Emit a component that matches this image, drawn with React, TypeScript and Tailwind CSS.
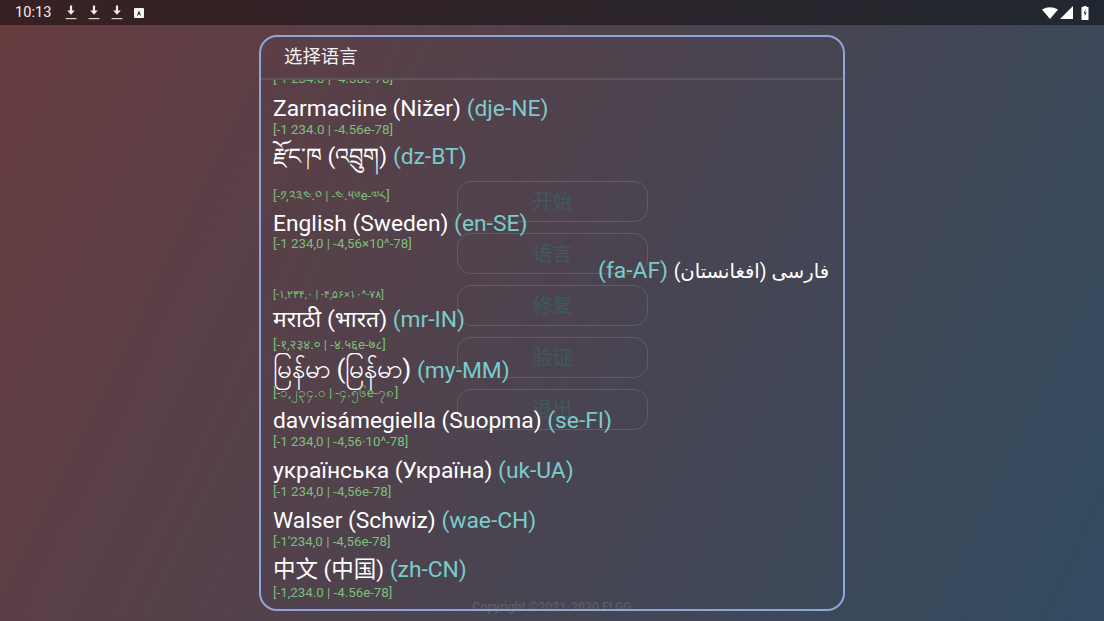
const rows = [
  { name: "Zarmaciine (Nižer)", tag: "(dje-NE)", num: "[-1 234.0 | -4.56e-78]", rowClass: "mt-[9px]", nameClass: "text-[22.8px]", numClass: "mt-0 text-[13.3px]" },
  { name: "རྫོང་ཁ (འབྲུག)", tag: "(dz-BT)", num: "[-༡,༢༣༤.༠ | -༤.༥༦e-༧༨]", rowClass: "mt-[6px]", nameClass: "text-[22.6px]", numClass: "mt-[18px] text-[13px]" },
  { name: "English (Sweden)", tag: "(en-SE)", num: "[-1 234,0 | -4,56×10^-78]", rowClass: "mt-[7px]", nameClass: "text-[22.8px]", numClass: "-mt-px text-[13.3px]" },
  { name: "فارسی (افغانستان)", tag: "(fa-AF)", num: "[-۱,۲۳۴,۰ | -۴,۵۶×۱۰^-۷۸]", rowClass: "mt-[6px]", nameClass: "text-[19.6px]", numClass: "mt-[3px] text-[11px]", rtl: true },
  { name: "मराठी (भारत)", tag: "(mr-IN)", num: "[-१,२३४.० | -४.५६e-७८]", rowClass: "mt-[4px]", nameClass: "text-[22.9px]", numClass: "mt-[4px] text-[13.2px]" },
  { name: "မြန်မာ (မြန်မာ)", tag: "(my-MM)", num: "[-၁,၂၃၄.၀ | -၄.၅၆e-၇၈]", rowClass: "mt-[4px]", nameClass: "text-[26px]", numClass: "mt-[1px] text-[13.5px]" },
  { name: "davvisámegiella (Suopma)", tag: "(se-FI)", num: "[-1 234,0 | -4,56·10^-78]", rowClass: "mt-[8px]", nameClass: "text-[22.8px]", numClass: "mt-0 text-[13.3px]" },
  { name: "українська (Україна)", tag: "(uk-UA)", num: "[-1 234,0 | -4,56e-78]", rowClass: "mt-[8px]", nameClass: "text-[22.8px]", numClass: "mt-0 text-[13.3px]" },
  { name: "Walser (Schwiz)", tag: "(wae-CH)", num: "[-1’234,0 | -4,56e-78]", rowClass: "mt-[8px]", nameClass: "text-[22.8px]", numClass: "mt-0 text-[13.3px]" },
  { name: "中文 (中国)", tag: "(zh-CN)", num: "[-1,234.0 | -4.56e-78]", rowClass: "mt-[7px]", nameClass: "text-[22.5px]", numClass: "mt-[2px] text-[13.3px]" },
];

const menu = ["开始", "语言", "修复", "验证", "退出"];

function DownloadIcon() {
  return (
    <svg width="12" height="15" viewBox="0 0 12 15" fill="#efecec">
      <path d="M4.9 0.5h2.2v5h2.7L6 9.8 2.2 5.5h2.7z" />
      <rect x="0.6" y="13" width="10.8" height="1.2" fill="#d8d4d4" />
    </svg>
  );
}

function StatusBar() {
  return (
    <div className="flex h-[25px] items-center bg-black/45 px-[15px] text-white">
      <span className="w-[37px] text-[14.6px] text-[#f1eeee]">10:13</span>
      <div className="ml-[13px] flex items-center gap-[11px]">
        <DownloadIcon />
        <DownloadIcon />
        <DownloadIcon />
      </div>
      <svg className="ml-[11px]" width="10" height="10" viewBox="0 0 10 10">
        <rect width="10" height="10" rx="1" fill="#f5f3f3" />
        <path d="M3 7.4 5 2.4l2 5H6L5.6 6.2H4.4L4 7.4z" fill="#222" />
      </svg>
      <div className="ml-auto flex items-center">
        <svg width="16" height="12" viewBox="0 0 16 12" fill="#fff">
          <path d="M0 2.6Q8-2 16 2.6L8 12z" />
        </svg>
        <svg className="ml-[2px]" width="13" height="13" viewBox="0 0 13 13" fill="#fff">
          <path d="M13 0v13H0z" />
        </svg>
        <svg className="ml-[8px]" width="8" height="14" viewBox="0 0 8 14">
          <path d="M2.5 0h3v1H7.5v13H.5V1h2z" fill="#fff" />
          <path d="M4.6 3 2.6 7.6h1.5L3.4 11 5.6 6.4H4.1z" fill="#222" />
        </svg>
      </div>
    </div>
  );
}

function LanguageRow({ row }: { row: (typeof rows)[number] }) {
  return (
    <div className={row.rowClass}>
      <div dir={row.rtl ? "rtl" : "ltr"} className="h-[26px] whitespace-nowrap text-[22.8px] leading-[25px] text-white">
        <span className={row.nameClass}>{row.name}</span>{" "}
        <span className="text-[#7accca]">{row.tag}</span>
      </div>
      <div className={`h-[16px] whitespace-nowrap leading-[16px] text-[#7ac07a] ${row.numClass}`}>{row.num}</div>
    </div>
  );
}

export default function App() {
  return (
    <div
      className="relative flex h-[621px] w-[1104px] flex-col overflow-hidden bg-[linear-gradient(116deg,#673b3e_0%,#314b60_100%)]"
      style={{ fontFamily: 'Roboto, "Noto Sans", "DejaVu Sans", "Noto Sans CJK SC", sans-serif' }}
    >
      <StatusBar />

      <div className="flex flex-1 flex-col items-center pt-[156px]">
        <div className="ml-px flex flex-col gap-[11px]">
          {menu.map((label) => (
            <div
              key={label}
              className="flex h-[41px] w-[191px] items-center justify-center rounded-[14px] border border-[#5f5d5f] text-[20px] text-[#3f5a5c]"
            >
              {label}
            </div>
          ))}
        </div>
        <div className="mt-auto mb-[7px] text-[12.2px] font-bold leading-[14px] text-[#5a5a62]">Copyright ©2021-2030 FLGG</div>
      </div>

      <div className="absolute left-[259px] top-[35px] flex h-[576px] w-[586px] flex-col overflow-hidden rounded-[18px] border-2 border-[#8ea6dc]">
        <div className="flex h-[43px] shrink-0 items-center border-b-2 border-[#5e555e] pb-px pl-[23px] text-[18.4px] text-[#f4f2f2]">选择语言</div>
        <div className="flex-1 overflow-hidden pl-[12px] pr-[14px]">
          <div className="-mt-[9px] h-[16px] text-[13.3px] leading-[16px] text-[#7ac07a]">[-1 234.0 | -4.56e-78]</div>
          {rows.map((row) => (
            <LanguageRow key={row.tag} row={row} />
          ))}
        </div>
      </div>
    </div>
  );
}
